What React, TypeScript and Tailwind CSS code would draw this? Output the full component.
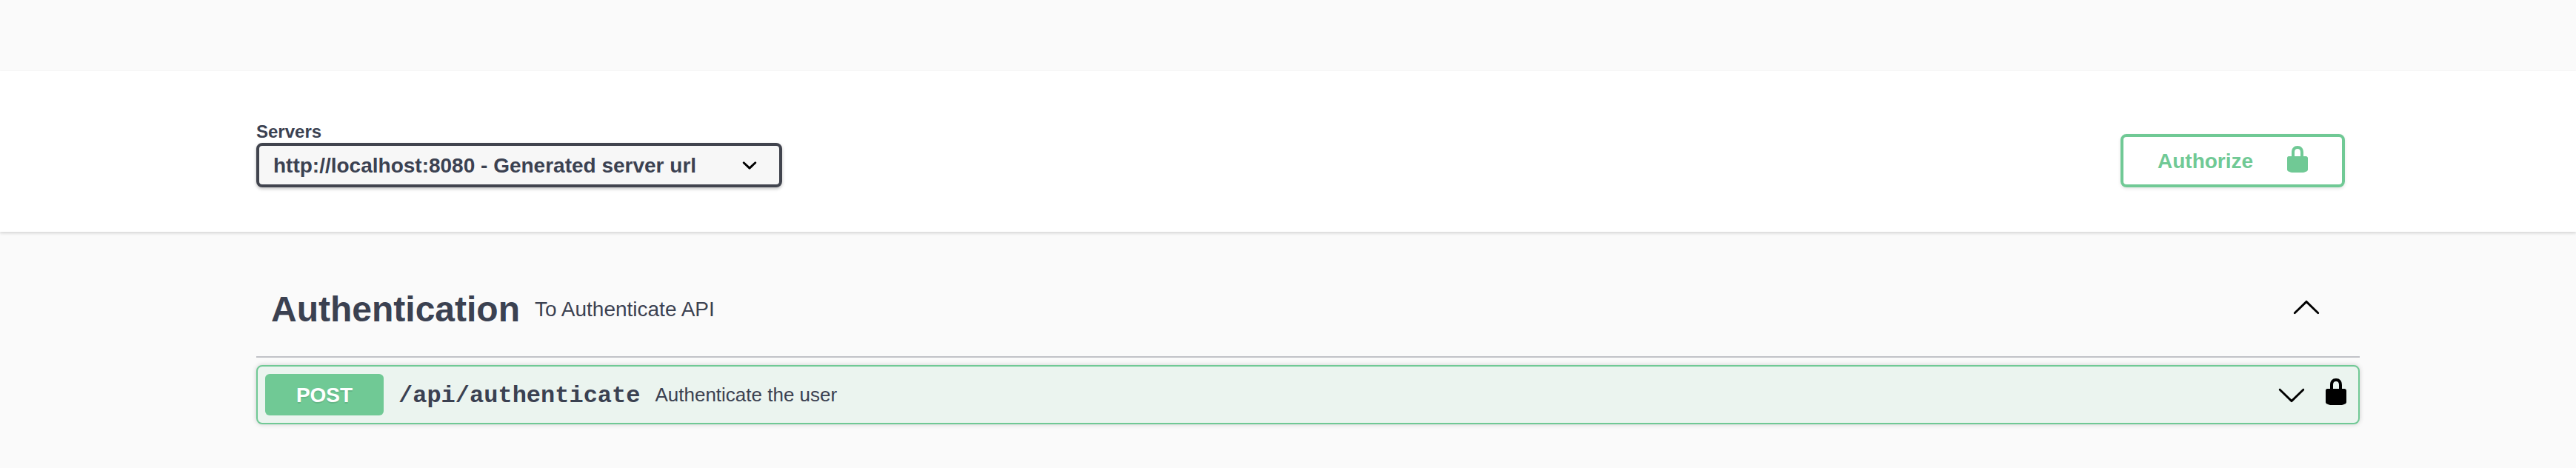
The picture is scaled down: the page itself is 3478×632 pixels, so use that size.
import React from "react";

function LockIcon({ className }: { className?: string }) {
  return (
    <svg viewBox="0 0 20 20" className={className} fill="currentColor" aria-hidden="true">
      <path d="M15.8 8H14V5.6C14 2.703 12.665 1 10 1 7.334 1 6 2.703 6 5.6V8H4c-.553 0-1 .646-1 1.199V17c0 .549.428 1.139.951 1.307l1.197.387C5.672 18.861 6.55 19 7.1 19h5.8c.549 0 1.428-.139 1.951-.307l1.196-.387c.524-.167.953-.757.953-1.306V9.199C17 8.646 16.352 8 15.8 8zM12 8H8V5.199C8 3.754 8.797 3 10 3c1.203 0 2 .754 2 2.199V8z" />
    </svg>
  );
}

function LargeArrow({ className }: { className?: string }) {
  return (
    <svg viewBox="0 0 20 20" className={className} fill="currentColor" aria-hidden="true">
      <path d="M17.418 6.109c.272-.268.709-.268.979 0s.271.701 0 .969l-7.908 7.83c-.27.268-.707.268-.979 0l-7.908-7.83c-.27-.268-.27-.701 0-.969.271-.268.709-.268.979 0L10 13.25l7.418-7.141z" />
    </svg>
  );
}

function SelectArrow({ className }: { className?: string }) {
  return (
    <svg viewBox="0 0 20 20" className={className} fill="currentColor" aria-hidden="true">
      <path d="M13.418 7.859a.695.695 0 01.978 0 .68.68 0 010 .969l-3.908 3.83a.697.697 0 01-.979 0l-3.908-3.83a.68.68 0 010-.969.695.695 0 01.978 0L10 11l3.418-3.141z" />
    </svg>
  );
}

function SchemeBar() {
  return (
    <section className="h-[217px] bg-white shadow-[0_2px_4px_rgba(0,0,0,0.15)]">
      <div className="ml-[346px] flex w-[2840px] items-start justify-between">
        <div className="pt-[68px]">
          <div className="h-[29px] text-[24px] leading-[28px] font-bold">Servers</div>
          <button className="flex h-[60px] w-[710px] items-center justify-between rounded-lg border-4 border-[#41444e] bg-[#f7f7f7] pr-5 pl-[19px] text-[28px] leading-8 font-bold shadow-[0_2px_4px_rgba(0,0,0,0.25)]">
            <span className="pt-0.5">http://localhost:8080 - Generated server url</span>
            <SelectArrow className="size-10 text-black" />
          </button>
        </div>
        <button className="mt-[85px] mr-5 flex h-[72px] w-[303px] items-center justify-between rounded-lg border-4 border-[#70c995] pr-10 pl-[46px] text-[28px] leading-8 font-bold text-[#70c995] shadow-[0_2px_4px_rgba(0,0,0,0.1)]">
          <span className="pt-0.5">Authorize</span>
          <LockIcon className="mb-1 size-10" />
        </button>
      </div>
    </section>
  );
}

function Operation() {
  return (
    <div className="mt-[10px] flex h-20 items-center rounded-lg border-2 border-[#70c995] bg-[#ebf4ef] px-[10px] shadow-[0_0_6px_rgba(0,0,0,0.19)]">
      <span className="flex h-14 w-40 items-center justify-center rounded-md bg-[#70c995] pt-0.5 text-[28px] leading-8 font-bold text-white [text-shadow:0_2px_0_rgba(0,0,0,0.1)]">
        POST
      </span>
      <span className="ml-5 pt-1 font-['Liberation_Mono',monospace] text-[32px] leading-9 font-bold">
        /api/authenticate
      </span>
      <span className="ml-5 text-[26px] leading-[30px]">Authenticate the user</span>
      <LargeArrow className="ml-auto size-10 text-black" />
      <LockIcon className="mb-2 ml-5 size-10 text-black" />
    </div>
  );
}

export default function App() {
  return (
    <main className="h-[632px] w-full overflow-hidden bg-[#fafafa] pt-24 font-['Liberation_Sans',Arial,sans-serif] text-[#3b4151]">
      <SchemeBar />
      <div className="ml-[346px] w-[2840px] pt-[50px]">
        <div className="flex h-[120px] items-center border-b-2 border-[#c1c2c7] pr-[52px] pl-5">
          <h3 className="mb-2 text-[48px] leading-[56px] font-bold">Authentication</h3>
          <span className="mb-2 ml-5 text-[28px] leading-8">To Authenticate API</span>
          <LargeArrow className="mb-3 ml-auto size-10 rotate-180 text-black" />
        </div>
        <Operation />
      </div>
    </main>
  );
}
